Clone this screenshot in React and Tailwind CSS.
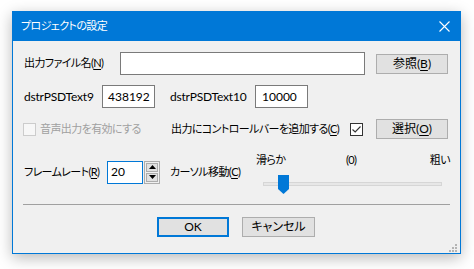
import React from 'react';

const font = { fontFamily: 'Lato, "Noto Sans CJK JP", sans-serif' };
const J = 'text-[11px] tracking-[-0.6px]';

const Btn = ({ children, primary = false, className = '' }) => (
  <div
    className={`flex items-center justify-center h-[20px] bg-[#e1e1e1] text-[12px] text-black whitespace-nowrap ${
      primary ? 'border-2 border-[#0078d7]' : 'border border-[#adadad]'
    } ${className}`}
  >
    {children}
  </div>
);

const Key = ({ children }) => <span className="underline underline-offset-2">{children}</span>;

const Spinner = () => (
  <div className="flex items-center">
    <div className="w-[36px] h-[23px] border border-[#0078d7] bg-white flex items-center pl-[3px] text-[12px]">
      20
    </div>
    <div className="ml-[1px] w-[16px] h-[23px] border border-[#adadad] bg-[#f0f0f0] flex flex-col p-[1px] gap-[1px]">
      <div className="flex-1 border border-[#adadad] bg-[#e1e1e1] flex items-center justify-center">
        <svg width="7" height="4" viewBox="0 0 7 4">
          <path d="M0 4 L3.5 0 L7 4 Z" fill="#000" />
        </svg>
      </div>
      <div className="flex-1 border border-[#adadad] bg-[#e1e1e1] flex items-center justify-center">
        <svg width="7" height="4" viewBox="0 0 7 4">
          <path d="M0 0 L7 0 L3.5 4 Z" fill="#000" />
        </svg>
      </div>
    </div>
  </div>
);

const Grip = () => (
  <svg width="8" height="8" viewBox="0 0 8 8">
    <rect x="6" y="0" width="2" height="2" fill="#b4b4b4" />
    <rect x="3" y="3" width="2" height="2" fill="#b4b4b4" />
    <rect x="6" y="3" width="2" height="2" fill="#b4b4b4" />
    <rect x="0" y="6" width="2" height="2" fill="#b4b4b4" />
    <rect x="3" y="6" width="2" height="2" fill="#b4b4b4" />
    <rect x="6" y="6" width="2" height="2" fill="#b4b4b4" />
  </svg>
);

export default function App() {
  return (
    <div
      className="w-[474px] h-[269px] bg-white pt-[11px] pl-[12px] overflow-hidden [font-feature-settings:'palt'] whitespace-nowrap"
      style={font}
    >
      <div className="w-[449px] h-[243px] border border-[#0078d7] bg-[#f0f0f0] flex flex-col shadow-[0_4px_14px_rgba(0,0,0,0.28)]">
        {/* Title bar */}
        <div className="h-[29px] bg-[#0078d7] flex items-center justify-between pl-[8px] pr-[10px] text-white">
          <span className={J}>プロジェクトの設定</span>
          <svg width="11" height="11" viewBox="0 0 11 11">
            <path d="M0.5 0.5 L10.5 10.5 M10.5 0.5 L0.5 10.5" stroke="#fff" strokeWidth="1.1" />
          </svg>
        </div>

        {/* Output file */}
        <div className="mt-[11px] h-[23px] flex items-center pl-[11px] text-[12px] text-black">
          <span className={`w-[96px] ${J}`}>出力ファイル名(<Key>N</Key>)</span>
          <div className="w-[245px] h-[23px] border border-[#7a7a7a] bg-white" />
          <Btn className="ml-[11px] w-[72px]">参照(<Key>B</Key>)</Btn>
        </div>

        {/* Text fields */}
        <div className="mt-[10px] h-[23px] flex items-center pl-[11px] text-[12px] text-black">
          <span className="w-[78px] tracking-[-0.2px]">dstrPSDText9</span>
          <div className="w-[53px] h-[23px] border border-[#7a7a7a] bg-white flex items-center pl-[5px]">438192</div>
          <span className="ml-[15px] w-[85px] tracking-[-0.2px]">dstrPSDText10</span>
          <div className="w-[53px] h-[23px] border border-[#7a7a7a] bg-white flex items-center pl-[6px]">10000</div>
        </div>

        {/* Checkboxes */}
        <div className="mt-[11px] h-[20px] flex items-center pl-[10px] text-[12px] text-black">
          <div className="w-[148px] flex items-center">
            <div className="w-[13px] h-[13px] border border-[#cccccc] bg-[#f7f7f7]" />
            <span className={`ml-[4px] text-[#a0a0a0] ${J}`}>音声出力を有効にする</span>
          </div>
          <span className={`w-[179px] ${J}`}>出力にコントロールバーを追加する(<Key>C</Key>)</span>
          <div className="w-[13px] h-[13px] border border-[#333333] bg-white flex items-center justify-center">
            <svg width="9" height="7" viewBox="0 0 9 7">
              <path d="M0.5 3.5 L3.2 6 L8.5 0.5" stroke="#333" strokeWidth="1.1" fill="none" />
            </svg>
          </div>
          <Btn className="ml-[13px] w-[72px]">選択(<Key>O</Key>)</Btn>
        </div>

        {/* Frame rate & cursor */}
        <div className="mt-[9px] h-[48px] flex pl-[11px] text-[12px] text-black">
          <div className="flex items-center">
            <span className={`w-[83px] ${J}`}>フレームレート(<Key>R</Key>)</span>
            <Spinner />
            <span className={`ml-[10px] w-[86px] ${J}`}>カーソル移動(<Key>C</Key>)</span>
          </div>
          <div className="w-[194px] flex flex-col">
            <div className={`mt-[4px] h-[14px] flex items-center leading-none ${J}`}>
              <span className="w-[90px]">滑らか</span>
              <span className="flex-1">(0)</span>
              <span>粗い</span>
            </div>
            <div className="mt-[9px] h-[20px] relative">
              <div className="ml-[7px] mt-[7px] w-[179px] h-[4px] bg-[#e7e7e7] border border-[#d6d6d6]" />
              <svg className="absolute left-[22px] top-0" width="11" height="19" viewBox="0 0 11 19">
                <path d="M0 0 H11 V14 L5.5 19 L0 14 Z" fill="#0078d7" />
              </svg>
            </div>
          </div>
        </div>

        {/* Separator */}
        <div className="mt-[8px] ml-[10px] w-[427px] h-px bg-[#a0a0a0]" />

        {/* Buttons */}
        <div className="mt-[12px] flex pl-[144px]">
          <Btn primary className="w-[72px]">OK</Btn>
          <Btn className={`ml-[13px] w-[73px]`}>キャンセル</Btn>
        </div>

        <div className="mt-auto flex justify-end pr-[3px] pb-[1px]">
          <Grip />
        </div>
      </div>
    </div>
  );
}
